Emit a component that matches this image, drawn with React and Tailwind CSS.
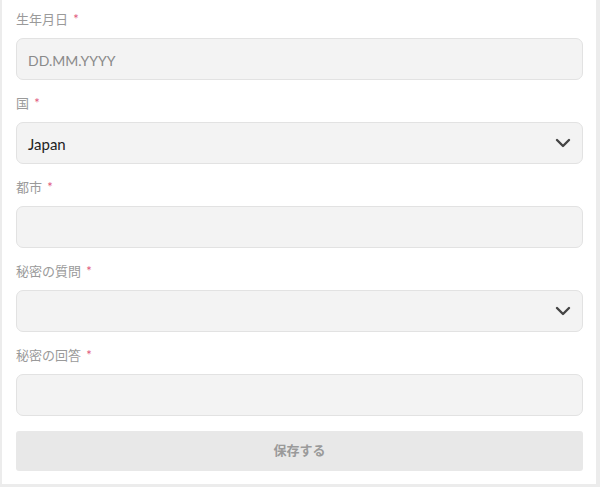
const font = { fontFamily: 'Lato, "Noto Sans CJK JP", sans-serif' }

function Label({ children }) {
  return (
    <div className="h-5 leading-5 text-[13px] text-[#9a9a9a]">
      {children} <span className="ml-[2px] text-[#e0567a]">*</span>
    </div>
  )
}

function Chevron() {
  return (
    <svg width="16" height="10" viewBox="0 0 16 10" className="text-[#444]">
      <polyline points="2,2 8,8 14,2" fill="none" stroke="currentColor" strokeWidth="2.4" strokeLinecap="round" strokeLinejoin="round" />
    </svg>
  )
}

function Field({ label, value, placeholder, select }) {
  return (
    <div className="flex flex-col gap-[9px]">
      <Label>{label}</Label>
      <div className="h-[42px] rounded-[7px] border border-[#e2e2e2] bg-[#f3f3f3] flex items-center justify-between pl-[11px] pr-[11px]">
        <span className={value ? "pt-[3px] text-[15px] text-[#222]" : "pt-[3px] text-[14px] text-[#8a8a8a]"}>
          {value || placeholder || ""}
        </span>
        {select && <Chevron />}
      </div>
    </div>
  )
}

export default function App() {
  return (
    <div className="bg-[#ececec] min-h-[487px] w-[600px] pl-[2px] pr-[4px] pb-[4px]" style={font}>
      <div className="bg-white pt-[9px] pb-[13px] px-[14px] pr-[13px] flex flex-col gap-[13px]">
        <Field label="生年月日" placeholder="DD.MM.YYYY" />
        <Field label="国" value="Japan" select />
        <Field label="都市" />
        <Field label="秘密の質問" select />
        <Field label="秘密の回答" />
        <button className="mt-[2px] h-[40px] rounded-[3px] bg-[#e8e8e8] text-[13px] font-bold text-[#9a9a9a]">
          保存する
        </button>
      </div>
    </div>
  )
}
